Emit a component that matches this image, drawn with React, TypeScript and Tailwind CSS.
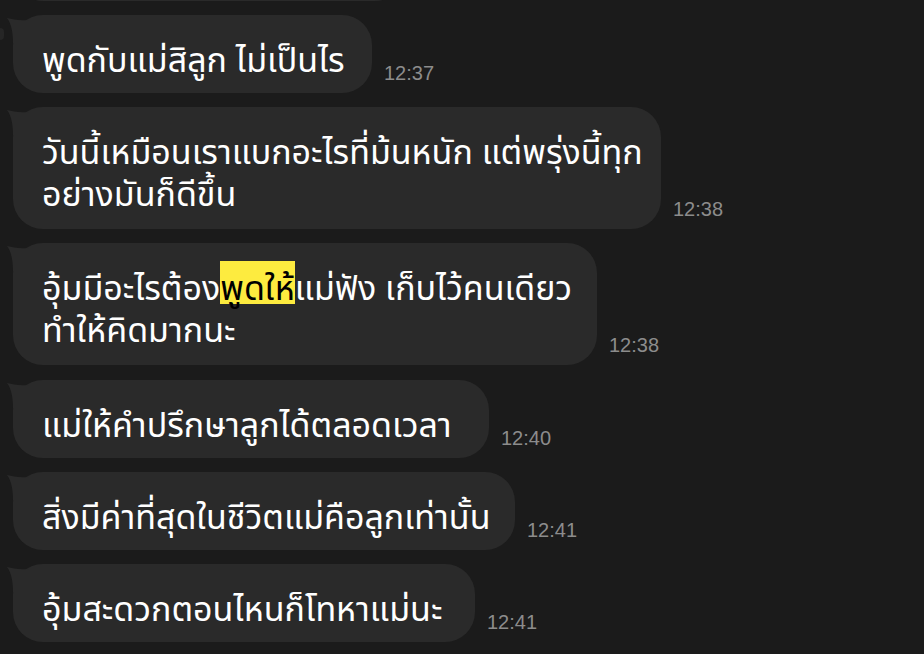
import React from "react";

type Msg = { lines: React.ReactNode[]; time: string; w: number };

const Tail = () => (
  <svg
    className="absolute left-[-6px] top-[2px]"
    width="22"
    height="26"
    viewBox="0 0 22 26"
  >
    <path d="M0 1 C 6 2.5, 12 4, 22 3 L 22 26 L 6 26 C 6 15, 4 6, 0 1 Z" fill="#2a2a2a" />
  </svg>
);

const msgs: Msg[] = [
  { lines: ["พูดกับแม่สิลูก ไม่เป็นไร"], time: "12:37", w: 359 },
  {
    lines: ["วันนี้เหมือนเราแบกอะไรที่ม้นหนัก แต่พรุ่งนี้ทุก", "อย่างมันก็ดีขึ้น"],
    time: "12:38",
    w: 648,
  },
  {
    lines: [
      <>
        อุ้มมีอะไรต้อง
        <span className="inline-block h-[43px] pt-[8px] -mt-[8px] bg-[#fdeb3f] text-black">พูดให้</span>
        แม่ฟัง เก็บไว้คนเดียว
      </>,
      "ทำให้คิดมากนะ",
    ],
    time: "12:38",
    w: 584,
  },
  { lines: ["แม่ให้คำปรึกษาลูกได้ตลอดเวลา"], time: "12:40", w: 476 },
  { lines: ["สิ่งมีค่าที่สุดในชีวิตแม่คือลูกเท่านั้น"], time: "12:41", w: 502 },
  { lines: ["อุ้มสะดวกตอนไหนก็โทหาแม่นะ"], time: "12:41", w: 462 },
];

export default function App() {
  return (
    <div className="w-[924px] h-[654px] overflow-hidden bg-[#1b1b1b] relative">
      <div className="absolute left-[-4px] top-[28px] w-[8px] h-[12px] rounded-full bg-[#262626]" />
      <div className="flex flex-col gap-[14px] pl-[13px]">
        <div className="-mt-[77px] h-[78px] w-[392px] rounded-[30px] bg-[#2a2a2a]" />
        {msgs.map((m, i) => (
          <div key={i} className={`flex items-end gap-3 ${i >= 3 ? "translate-y-[1px]" : ""}`}>
            <div
              className={`relative rounded-[30px] bg-[#2a2a2a] pt-[26px] pl-[29px] text-white whitespace-nowrap text-[34px] leading-[42px] ${
                m.lines.length > 1 ? "pb-[12px]" : "pb-[10px]"
              }`}
              style={{ width: m.w, fontFamily: '"Noto Sans Thai", "Noto Sans", "DejaVu Sans", sans-serif' }}
            >
              <Tail />
              <div className="relative">
                {m.lines.map((l, j) => (
                  <div key={j}>{l}</div>
                ))}
              </div>
            </div>
            <div
              className="mb-[10px] text-[20px] leading-[20px] text-[#8c8c8c]"
              style={{ fontFamily: '"Liberation Sans", Arial, sans-serif' }}
            >
              {m.time}
            </div>
          </div>
        ))}
      </div>
    </div>
  );
}
